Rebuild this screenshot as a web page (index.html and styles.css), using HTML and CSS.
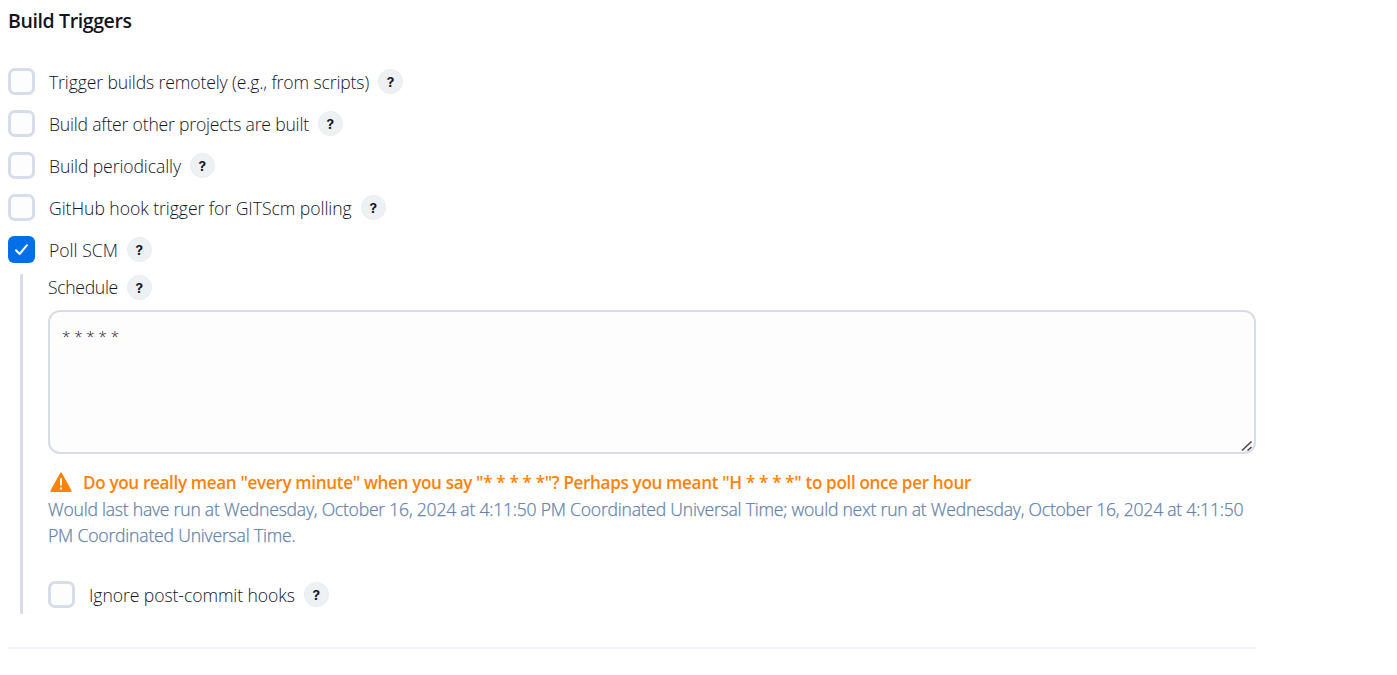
FILE: index.html
```html
<!DOCTYPE html>
<html lang="en">
<head>
<meta charset="utf-8">
<title>Build Triggers</title>
<link rel="stylesheet" href="styles.css">
</head>
<body>
<main class="section">
  <h2 class="title">Build Triggers</h2>
  <div class="options">
    <div class="option"><span class="box"></span><span class="label l1">Trigger builds remotely (e.g., from scripts)</span><span class="help">?</span></div>
    <div class="option"><span class="box"></span><span class="label l2">Build after other projects are built</span><span class="help">?</span></div>
    <div class="option"><span class="box"></span><span class="label l3">Build periodically</span><span class="help">?</span></div>
    <div class="option"><span class="box"></span><span class="label l4">GitHub hook trigger for GITScm polling</span><span class="help">?</span></div>
    <div class="option"><span class="box checked"><svg width="27" height="27" viewBox="0 0 27 27"><path d="M8 14.2l3.6 3.8 7.4-8.8" fill="none" stroke="#fff" stroke-width="2" stroke-linecap="round" stroke-linejoin="round"/></svg></span><span class="label l5">Poll SCM</span><span class="help">?</span></div>
  </div>
  <div class="nested">
    <div class="schedule"><span class="label l6">Schedule</span><span class="help">?</span></div>
    <div class="textarea"><span class="cron">* * * * *</span>
      <svg class="grip" width="12" height="12" viewBox="0 0 12 12"><path d="M1 10.5L10.5 1.5M6.5 10.5L10.5 7" fill="none" stroke="#444" stroke-width="1.5"/></svg>
    </div>
    <div class="warning">
      <svg width="22" height="21" viewBox="0 0 22 21"><path d="M11 1.5L20.6 19H1.4z" fill="#fe820a" stroke="#fe820a" stroke-width="2" stroke-linejoin="round"/><path d="M11 6.2v7.4M11 15.5v2" stroke="#fff" stroke-width="2"/></svg>
      <span class="message">Do you really mean "every minute" when you say "* * * * *"? Perhaps you meant "H * * * *" to poll once per hour</span>
    </div>
    <div class="runs"><span class="r1">Would last have run at Wednesday, October 16, 2024 at 4:11:50 PM Coordinated Universal Time; would next run at Wednesday, October 16, 2024 at 4:11:50</span> <span class="r2">PM Coordinated Universal Time.</span></div>
    <div class="option ignore"><span class="box"></span><span class="label l7">Ignore post-commit hooks</span><span class="help">?</span></div>
  </div>
</main>
</body>
</html>
```
FILE: styles.css
```css
* { box-sizing: border-box; }
body { margin: 0; background: #fff; color: #14141f; font-family: "Open Sans", "Noto Sans", sans-serif; font-size: 18px; }
.section { width: 1248px; margin-left: 8px; height: 649px; border-bottom: 2px solid #f2f2f8; }
.title { margin: 0; padding-top: 7px; height: 68px; font-size: 19.5px; line-height: 28px; font-weight: 600; white-space: nowrap; letter-spacing: -.38px; }
.options { display: grid; gap: 15px; }
.option { display: flex; align-items: center; height: 27px; }
.box { flex: none; width: 27px; height: 27px; border: 3px solid #d6dde8; border-radius: 7px; background: #fdfdfd; margin-right: 14px; }
.checked { border: 0; background: #006fe8; border-radius: 6px; }
.box svg { display: block; }
.label { font-size: 17.6px; line-height: 27px; font-weight: 300; white-space: nowrap; position: relative; top: 1px; }
.l1 { letter-spacing: -.125px; }
.l2 { letter-spacing: -.2px; }
.l3 { letter-spacing: -.11px; }
.l4 { letter-spacing: -.05px; }
.l6 { letter-spacing: -.33px; top: 0; }
.l7 { letter-spacing: -.08px; }
.help { flex: none; width: 25px; height: 25px; margin-left: 9px; border-radius: 50%; border: 1px solid #e8edf1; background: #eef1f4; display: flex; align-items: center; justify-content: center; font-family: Inter, sans-serif; font-weight: 700; font-size: 13.5px; line-height: 24px; }
.nested { margin: 11px 0 0 12px; height: 340px; border-left: 3px solid #d6dde8; border-radius: 2px; padding-left: 25px; }
.schedule { display: flex; align-items: center; height: 27px; }
.textarea { position: relative; width: 1208px; height: 144px; margin-top: 9px; border: 2px solid #d8dce8; border-radius: 12px; background: #fdfdfd; padding: 9px 12px; }
.cron { font-size: 15px; line-height: 30px; font-weight: 300; color: #14141f; }
.grip { position: absolute; right: 1px; bottom: 0; }
.warning { display: flex; align-items: center; height: 27px; margin-top: 15px; padding-left: 2px; gap: 11px; color: #fe820a; }
.message { font-size: 17.1px; font-weight: 600; white-space: nowrap; letter-spacing: -.34px; }
.runs { color: #6482a8; font-size: 17.6px; line-height: 26px; height: 85px; font-weight: 300; -webkit-text-stroke: .25px #6482a8; }
.runs span { display: block; white-space: nowrap; }
.r1 { letter-spacing: -.236px; }
.r2 { letter-spacing: -.2px; }
```
